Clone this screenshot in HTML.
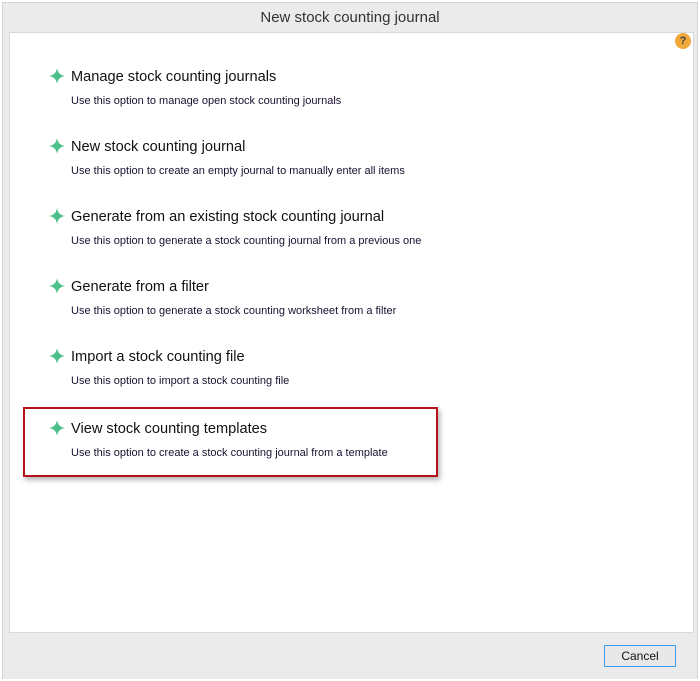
<!DOCTYPE html>
<html><head><style>
body{margin:0;width:700px;height:681px;background:#fff;position:relative;overflow:hidden;font-family:"Liberation Sans",sans-serif}
.win{position:absolute;left:2px;top:2px;width:694px;height:676px;background:#ebebeb;border:1px solid #d4d4d4;border-bottom:none}
.title{position:absolute;left:0;right:0;top:6px;text-align:center;font-size:15px;color:#333}
.content{position:absolute;left:6px;top:29px;width:683px;height:599px;background:#fff;border:1px solid #d9d9d9}
.help{position:absolute;left:665px;top:0px;width:16px;height:16px;border-radius:50%;background:#f0a93a;color:#444;font-size:11px;font-weight:bold;text-align:center;line-height:16px}
.item{position:absolute;left:40px}
.item .t{position:absolute;left:22px;top:2px;font-size:14.6px;color:#111;white-space:nowrap}
.item .d{position:absolute;left:22px;top:28px;font-size:11px;color:#1a1030;white-space:nowrap}
.item svg{position:absolute;left:0;top:1px}
.red{position:absolute;left:13px;top:374px;width:411px;height:66px;border:2px solid #b5121b;box-shadow:2px 3px 5px rgba(0,0,0,.3)}
.btn{position:absolute;left:604px;top:645px;width:70px;height:20px;border:1px solid #3c9cf0;background:#e8e8e8;font-size:12px;text-align:center;line-height:20px;color:#111}
</style></head><body>
<div class="win">
<div class="title">New stock counting journal</div>
<div class="content">
<div class="help">?</div>
<div class="red"></div>
</div>
</div>
<div class="item" style="top:67px;left:49px"><svg width="16" height="16" viewBox="0 0 16 16"><path d="M8 0Q9 7 16 8Q9 9 8 16Q7 9 0 8Q7 7 8 0Z" fill="#4cbf8a"/></svg><div class="t">Manage stock counting journals</div><div class="d">Use this option to manage open stock counting journals</div></div>
<div class="item" style="top:137px;left:49px"><svg width="16" height="16" viewBox="0 0 16 16"><path d="M8 0Q9 7 16 8Q9 9 8 16Q7 9 0 8Q7 7 8 0Z" fill="#4cbf8a"/></svg><div class="t">New stock counting journal</div><div class="d">Use this option to create an empty journal to manually enter all items</div></div>
<div class="item" style="top:207px;left:49px"><svg width="16" height="16" viewBox="0 0 16 16"><path d="M8 0Q9 7 16 8Q9 9 8 16Q7 9 0 8Q7 7 8 0Z" fill="#4cbf8a"/></svg><div class="t">Generate from an existing stock counting journal</div><div class="d">Use this option to generate a stock counting journal from a previous one</div></div>
<div class="item" style="top:277px;left:49px"><svg width="16" height="16" viewBox="0 0 16 16"><path d="M8 0Q9 7 16 8Q9 9 8 16Q7 9 0 8Q7 7 8 0Z" fill="#4cbf8a"/></svg><div class="t">Generate from a filter</div><div class="d">Use this option to generate a stock counting worksheet from a filter</div></div>
<div class="item" style="top:347px;left:49px"><svg width="16" height="16" viewBox="0 0 16 16"><path d="M8 0Q9 7 16 8Q9 9 8 16Q7 9 0 8Q7 7 8 0Z" fill="#4cbf8a"/></svg><div class="t">Import a stock counting file</div><div class="d">Use this option to import a stock counting file</div></div>
<div class="item" style="top:419px;left:49px"><svg width="16" height="16" viewBox="0 0 16 16"><path d="M8 0Q9 7 16 8Q9 9 8 16Q7 9 0 8Q7 7 8 0Z" fill="#4cbf8a"/></svg><div class="t">View stock counting templates</div><div class="d">Use this option to create a stock counting journal from a template</div></div>
<div class="btn">Cancel</div>
</body></html>
